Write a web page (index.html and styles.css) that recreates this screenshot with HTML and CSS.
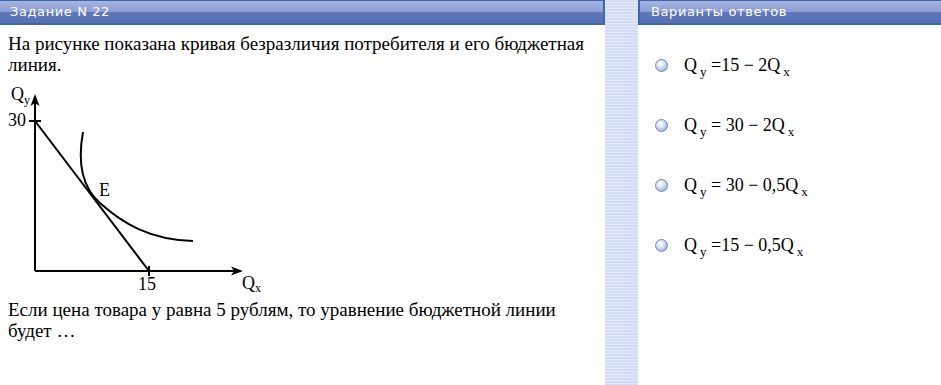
FILE: index.html
```html
<!DOCTYPE html>
<html lang="ru">
<head>
  <meta charset="UTF-8">
  <title>Задание N 22</title>
  <link rel="stylesheet" href="styles.css">
</head>
<body>
  <div class="page">
    <div class="task">
      <div class="bar">Задание N 22</div>
      <div class="task-body">
        <p class="text">На рисунке показана кривая безразличия потребителя и его бюджетная линия.</p>
        <svg class="graph" width="280" height="214" viewBox="0 0 280 214">
          <g stroke="#000" stroke-width="2" fill="none">
            <line x1="35" y1="186" x2="35" y2="18"></line>
            <line x1="35" y1="186" x2="234" y2="186"></line>
            <line x1="29" y1="36" x2="41" y2="36"></line>
            <line x1="149" y1="181" x2="149" y2="191"></line>
            <line x1="35" y1="36" x2="149" y2="186"></line>
            <path d="M83 47 C77 80 84 104 100 118 C122 138 150 155 193 156"></path>
          </g>
          <path d="M35 9 L39.5 21 L35 18 L30.5 21 Z" fill="#000"></path>
          <path d="M243 186 L231 181.5 L234 186 L231 190.5 Z" fill="#000"></path>
          <g font-family="'Liberation Serif', serif" font-size="18" fill="#000">
            <text x="11" y="15">Q</text>
            <text x="24" y="19" font-size="12">y</text>
            <text x="8" y="41">30</text>
            <text x="99" y="111">E</text>
            <text x="138" y="205">15</text>
            <text x="242" y="204">Q</text>
            <text x="255" y="207" font-size="12">x</text>
          </g>
        </svg>
        <p class="text">Если цена товара у равна 5 рублям, то уравнение бюджетной линии будет …</p>
      </div>
    </div>
    <div class="stripe"></div>
    <div class="answers">
      <div class="bar">Варианты ответов</div>
      <ul class="options">
        <li class="option"><span class="radio"></span><span class="formula">Q<sub>y</sub> =15 − 2Q<sub>x</sub></span></li>
        <li class="option"><span class="radio"></span><span class="formula">Q<sub>y</sub> = 30 − 2Q<sub>x</sub></span></li>
        <li class="option"><span class="radio"></span><span class="formula">Q<sub>y</sub> = 30 − 0,5Q<sub>x</sub></span></li>
        <li class="option"><span class="radio"></span><span class="formula">Q<sub>y</sub> =15 − 0,5Q<sub>x</sub></span></li>
      </ul>
    </div>
  </div>
</body>
</html>
```

FILE: styles.css
```css
html, body {
  margin: 0;
  height: 100%;
  background: #fff;
}
.page {
  display: flex;
  height: 385px;
}
.task {
  width: 605px;
}
.stripe {
  width: 33px;
  background: repeating-linear-gradient(#d3dcf6 0, #d3dcf6 2px, #e6ecfc 2px, #e6ecfc 3px);
}
.answers {
  flex: 1;
}
.bar {
  height: 22px;
  line-height: 22px;
  padding-left: 10px;
  color: #fff;
  font-family: "DejaVu Sans", sans-serif;
  font-size: 13px;
  letter-spacing: 0.6px;
  border-top: 1px solid #3b68ad;
  border-bottom: 2px solid #3a67ac;
  background: linear-gradient(#a6b4e1 0, #8c9dd3 48%, #5f76b9 50%, #5a70b4 100%);
}
.task .bar {
  border-right: 2px solid #3a67ac;
}
.answers .bar {
  border-left: 2px solid #3a67ac;
  padding-left: 11px;
}
.task-body {
  padding: 8px 8px 0 8px;
}
.text {
  margin: 0;
  font-family: "Liberation Serif", serif;
  font-size: 19px;
  line-height: 21px;
  color: #000;
}
.graph {
  display: block;
  margin: 10px 0 0 -8px;
  overflow: visible;
}
.options {
  list-style: none;
  margin: 0;
  padding: 10px 0 0 17px;
}
.option {
  display: flex;
  align-items: center;
  height: 60px;
}
.radio {
  width: 11px;
  height: 11px;
  border-radius: 50%;
  border: 1px solid #7087b8;
  background: radial-gradient(circle at 40% 35%, #ffffff 0, #e2eaf8 30%, #a6bce2 70%, #7f98cc 100%);
  margin-right: 16px;
}
.formula {
  font-family: "Liberation Serif", serif;
  font-size: 18px;
  color: #000;
  white-space: pre;
}
.formula sub {
  font-size: 13px;
  margin-left: 3px;
  vertical-align: -5px;
  line-height: 0;
}
```
